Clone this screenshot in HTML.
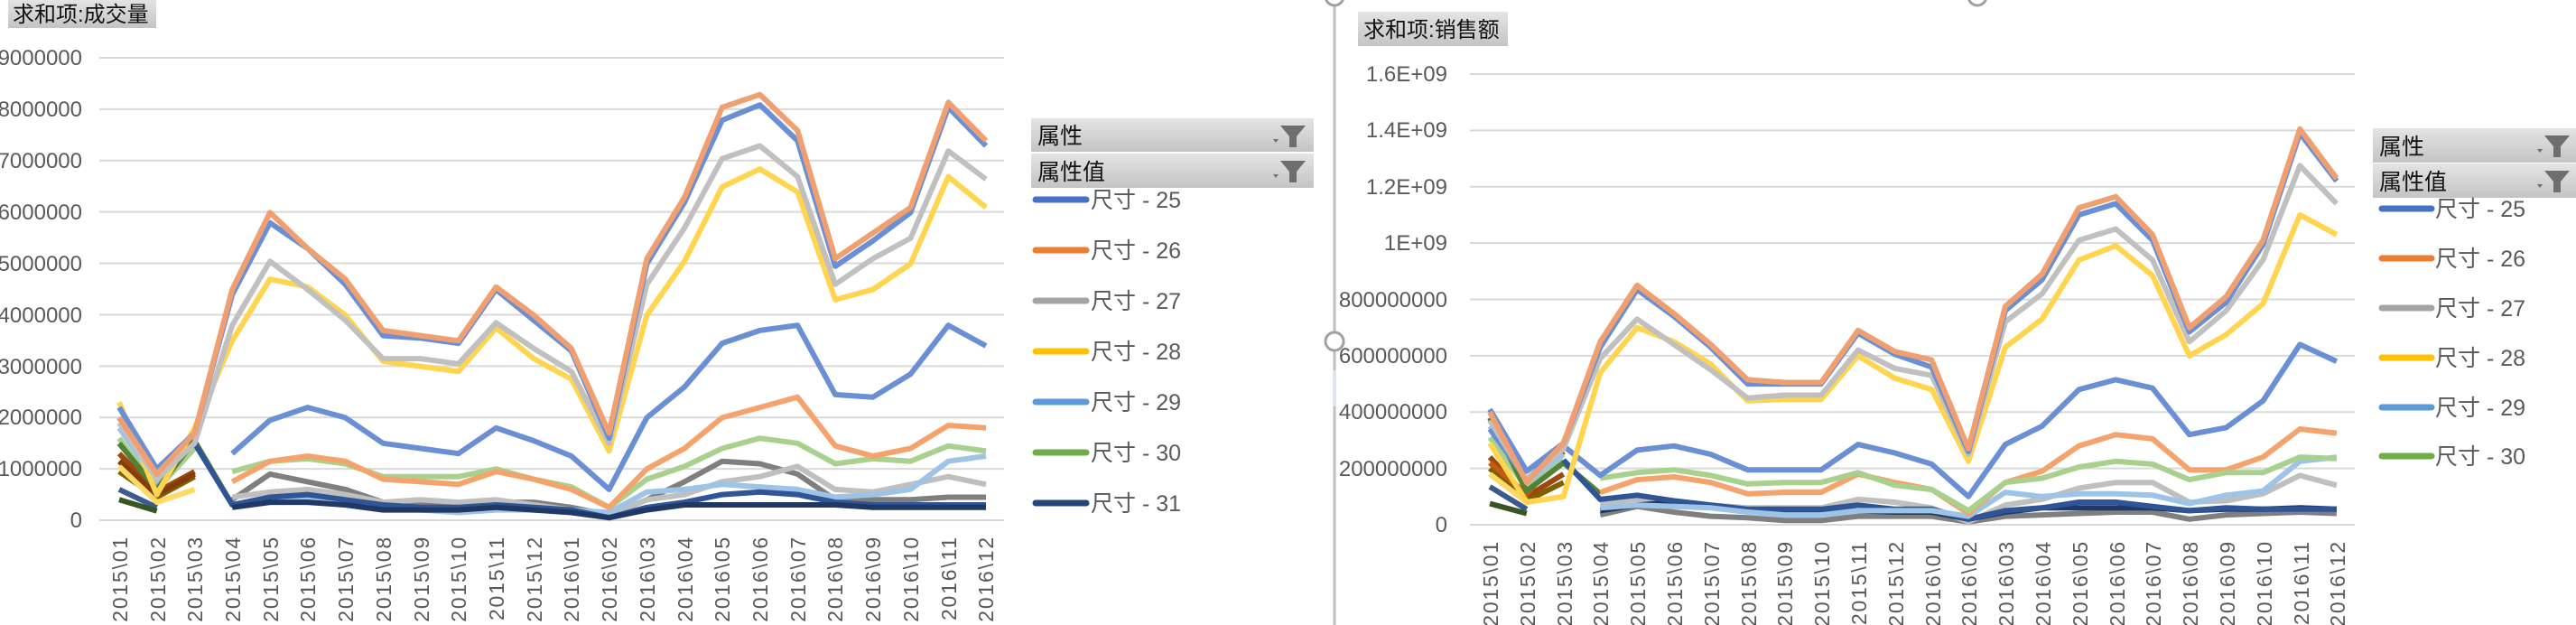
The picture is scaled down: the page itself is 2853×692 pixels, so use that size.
<!DOCTYPE html>
<html><head><meta charset="utf-8">
<style>
html,body{margin:0;padding:0;background:#fff;}
body{width:2853px;height:692px;overflow:hidden;position:relative;font-family:"Liberation Sans","Noto Sans CJK SC",sans-serif;}
svg{position:absolute;left:0;top:0;}
text{font-family:"Liberation Sans","Noto Sans CJK SC",sans-serif;fill:#595959;}
.xl text{letter-spacing:1.8px;}
</style></head><body>
<svg id="s" width="2853" height="692" viewBox="0 0 2853 692">
<defs>
<linearGradient id="hg" x1="0" y1="0" x2="0" y2="1"><stop offset="0" stop-color="#e4e4e4"/><stop offset="1" stop-color="#c4c4c4"/></linearGradient>
</defs>
<!-- LEFT CHART -->
<rect x="9" y="0" width="164" height="31" fill="url(#hg)"/>
<text x="14" y="24" font-size="24" style="fill:#111">求和项:成交量</text>
<g id="lgrid" stroke="#d9d9d9" stroke-width="2"></g>
<g font-size="24" text-anchor="end">
<text x="91" y="72">9000000</text><text x="91" y="129">8000000</text><text x="91" y="186">7000000</text>
<text x="91" y="243">6000000</text><text x="91" y="300">5000000</text><text x="91" y="357">4000000</text>
<text x="91" y="414">3000000</text><text x="91" y="470">2000000</text><text x="91" y="527">1000000</text>
<text x="91" y="584">0</text>
</g>
<g id="lx" class="xl" font-size="23" text-anchor="end">
<text transform="translate(141,593) rotate(-90)">2015\01</text>
<text transform="translate(183,593) rotate(-90)">2015\02</text>
<text transform="translate(224,593) rotate(-90)">2015\03</text>
<text transform="translate(266,593) rotate(-90)">2015\04</text>
<text transform="translate(308,593) rotate(-90)">2015\05</text>
<text transform="translate(349,593) rotate(-90)">2015\06</text>
<text transform="translate(391,593) rotate(-90)">2015\07</text>
<text transform="translate(433,593) rotate(-90)">2015\08</text>
<text transform="translate(475,593) rotate(-90)">2015\09</text>
<text transform="translate(516,593) rotate(-90)">2015\10</text>
<text transform="translate(558,593) rotate(-90)">2015\11</text>
<text transform="translate(600,593) rotate(-90)">2015\12</text>
<text transform="translate(641,593) rotate(-90)">2016\01</text>
<text transform="translate(683,593) rotate(-90)">2016\02</text>
<text transform="translate(725,593) rotate(-90)">2016\03</text>
<text transform="translate(767,593) rotate(-90)">2016\04</text>
<text transform="translate(808,593) rotate(-90)">2016\05</text>
<text transform="translate(850,593) rotate(-90)">2016\06</text>
<text transform="translate(892,593) rotate(-90)">2016\07</text>
<text transform="translate(933,593) rotate(-90)">2016\08</text>
<text transform="translate(975,593) rotate(-90)">2016\09</text>
<text transform="translate(1017,593) rotate(-90)">2016\10</text>
<text transform="translate(1059,593) rotate(-90)">2016\11</text>
<text transform="translate(1100,593) rotate(-90)">2016\12</text>
</g>
<g id="llines" fill="none" stroke-width="6" stroke-linejoin="round"></g>
<!-- left legend -->
<rect x="1142" y="131" width="313" height="37" fill="url(#hg)"/>
<rect x="1142" y="170" width="313" height="38" fill="url(#hg)"/>
<text x="1149" y="159" font-size="25" style="fill:#111">属性</text>
<text x="1149" y="199" font-size="25" style="fill:#111">属性值</text>
<g fill="#6e6e6e">
<path d="M1418 139h28l-10 12v12h-8v-12z"/><path d="M1410 154h6l-3 4z"/>
<path d="M1418 178h28l-10 12v12h-8v-12z"/><path d="M1410 193h6l-3 4z"/>
</g>
<g stroke-width="7" stroke-linecap="round">
<line x1="1147" y1="221" x2="1203" y2="221" stroke="#4472c4"/>
<line x1="1147" y1="277" x2="1203" y2="277" stroke="#ed7d31"/>
<line x1="1147" y1="333" x2="1203" y2="333" stroke="#a5a5a5"/>
<line x1="1147" y1="389" x2="1203" y2="389" stroke="#ffc000"/>
<line x1="1147" y1="445" x2="1203" y2="445" stroke="#5b9bd5"/>
<line x1="1147" y1="501" x2="1203" y2="501" stroke="#70ad47"/>
<line x1="1147" y1="557" x2="1203" y2="557" stroke="#264478"/>
</g>
<g font-size="25">
<text x="1208" y="230">尺寸 - 25</text><text x="1208" y="286">尺寸 - 26</text>
<text x="1208" y="342">尺寸 - 27</text><text x="1208" y="398">尺寸 - 28</text>
<text x="1208" y="454">尺寸 - 29</text><text x="1208" y="510">尺寸 - 30</text>
<text x="1208" y="566">尺寸 - 31</text>
</g>
<!-- divider -->
<line x1="1478" y1="0" x2="1478" y2="692" stroke="#bfbfbf" stroke-width="3"/>
<circle cx="1478" cy="-4" r="10" fill="#fff" stroke="#a0a0a0" stroke-width="3"/>
<circle cx="1478" cy="378" r="10" fill="#fff" stroke="#a0a0a0" stroke-width="3"/>
<circle cx="2190" cy="-4" r="10" fill="#fff" stroke="#a0a0a0" stroke-width="3"/>
<rect x="1476" y="410" width="4" height="40" fill="#dde4f0"/>

<!-- RIGHT CHART -->
<rect x="1504" y="13" width="166" height="38" fill="url(#hg)"/>
<text x="1510" y="41" font-size="24" style="fill:#111">求和项:销售额</text>
<g id="rgrid" stroke="#d9d9d9" stroke-width="2"></g>
<g font-size="24" text-anchor="end">
<text x="1603" y="90">1.6E+09</text><text x="1603" y="152">1.4E+09</text>
<text x="1603" y="215">1.2E+09</text><text x="1603" y="277">1E+09</text>
<text x="1603" y="340">800000000</text><text x="1603" y="402">600000000</text>
<text x="1603" y="464">400000000</text><text x="1603" y="527">200000000</text>
<text x="1603" y="589">0</text>
</g>
<g id="rx" class="xl" font-size="23" text-anchor="end">
<text transform="translate(1659,598) rotate(-90)">2015\01</text>
<text transform="translate(1700,598) rotate(-90)">2015\02</text>
<text transform="translate(1741,598) rotate(-90)">2015\03</text>
<text transform="translate(1781,598) rotate(-90)">2015\04</text>
<text transform="translate(1822,598) rotate(-90)">2015\05</text>
<text transform="translate(1863,598) rotate(-90)">2015\06</text>
<text transform="translate(1904,598) rotate(-90)">2015\07</text>
<text transform="translate(1945,598) rotate(-90)">2015\08</text>
<text transform="translate(1985,598) rotate(-90)">2015\09</text>
<text transform="translate(2026,598) rotate(-90)">2015\10</text>
<text transform="translate(2067,598) rotate(-90)">2015\11</text>
<text transform="translate(2108,598) rotate(-90)">2015\12</text>
<text transform="translate(2149,598) rotate(-90)">2016\01</text>
<text transform="translate(2189,598) rotate(-90)">2016\02</text>
<text transform="translate(2230,598) rotate(-90)">2016\03</text>
<text transform="translate(2271,598) rotate(-90)">2016\04</text>
<text transform="translate(2312,598) rotate(-90)">2016\05</text>
<text transform="translate(2353,598) rotate(-90)">2016\06</text>
<text transform="translate(2393,598) rotate(-90)">2016\07</text>
<text transform="translate(2434,598) rotate(-90)">2016\08</text>
<text transform="translate(2475,598) rotate(-90)">2016\09</text>
<text transform="translate(2516,598) rotate(-90)">2016\10</text>
<text transform="translate(2557,598) rotate(-90)">2016\11</text>
<text transform="translate(2597,598) rotate(-90)">2016\12</text>
</g>
<g id="rlines" fill="none" stroke-width="6" stroke-linejoin="round"></g>
<rect x="2628" y="142" width="225" height="38" fill="url(#hg)"/>
<rect x="2628" y="181" width="225" height="38" fill="url(#hg)"/>
<text x="2635" y="171" font-size="25" style="fill:#111">属性</text>
<text x="2635" y="210" font-size="25" style="fill:#111">属性值</text>
<g fill="#6e6e6e">
<path d="M2818 150h28l-10 12v12h-8v-12z"/><path d="M2810 165h6l-3 4z"/>
<path d="M2818 189h28l-10 12v12h-8v-12z"/><path d="M2810 204h6l-3 4z"/>
</g>
<g stroke-width="7" stroke-linecap="round">
<line x1="2638" y1="231" x2="2693" y2="231" stroke="#4472c4"/>
<line x1="2638" y1="286" x2="2693" y2="286" stroke="#ed7d31"/>
<line x1="2638" y1="341" x2="2693" y2="341" stroke="#a5a5a5"/>
<line x1="2638" y1="396" x2="2693" y2="396" stroke="#ffc000"/>
<line x1="2638" y1="451" x2="2693" y2="451" stroke="#5b9bd5"/>
<line x1="2638" y1="505" x2="2693" y2="505" stroke="#70ad47"/>
</g>
<g font-size="25">
<text x="2697" y="240">尺寸 - 25</text><text x="2697" y="295">尺寸 - 26</text>
<text x="2697" y="350">尺寸 - 27</text><text x="2697" y="405">尺寸 - 28</text>
<text x="2697" y="460">尺寸 - 29</text><text x="2697" y="514">尺寸 - 30</text>
</g>
</svg>
<script>
(function(){
var NS="http://www.w3.org/2000/svg";
function grid(id,x1,x2,ys){var g=document.getElementById(id);ys.forEach(function(y){var l=document.createElementNS(NS,"line");l.setAttribute("x1",x1);l.setAttribute("x2",x2);l.setAttribute("y1",y);l.setAttribute("y2",y);g.appendChild(l);});}
var ly=[];for(var i=0;i<10;i++)ly.push(64+i*(512/9));
grid("lgrid",110,1112,ly);
var ry=[];for(var i=0;i<9;i++)ry.push(82+i*(499/8));
grid("rgrid",1628,2608,ry);
function draw(id,x0,dx,y0,sc,series){var g=document.getElementById(id);
series.forEach(function(s){var pts=[];s[1].forEach(function(v,i){if(v===null){if(pts.length>1)add(pts);pts=[];return;}pts.push((x0+i*dx).toFixed(1)+","+(y0-v*sc).toFixed(1));});if(pts.length>1)add(pts);
function add(p){var pl=document.createElementNS(NS,"polyline");pl.setAttribute("points",p.join(" "));pl.setAttribute("stroke",s[0]);g.appendChild(pl);}});}
var N=null;
var L=[
["#3d5a8c",[0.6,0.25,N]],["#375623",[0.4,0.18,N]],
["#9e480e",[1.3,0.55,0.95]],["#7f6000",[0.95,0.45,0.85]],["#843c0c",[1.15,0.5,0.9]],
["#a9d18e",[1.6,0.6,1.4]],["#9dc3e6",[1.8,0.75,1.5]],["#c55a11",[2.0,0.85,1.6]],
["#ffd966",[1.05,0.35,0.6]],["#548235",[1.5,0.6,1.55,0.3]],
["#7f7f7f",[N,N,N,0.4,0.9,0.75,0.6,0.35,0.3,0.3,0.35,0.35,0.25,0.1,0.4,0.75,1.15,1.1,0.9,0.4,0.4,0.4,0.45,0.45]],
["#bfbfbf",[N,N,N,0.45,0.55,0.6,0.5,0.35,0.4,0.35,0.4,0.3,0.2,0.1,0.4,0.5,0.75,0.85,1.05,0.6,0.55,0.7,0.85,0.7]],
["#9dc3e6",[N,N,N,0.3,0.45,0.4,0.3,0.25,0.2,0.15,0.2,0.2,0.2,0.15,0.55,0.6,0.7,0.65,0.6,0.45,0.5,0.6,1.15,1.25]],
["#2f5597",[N,N,1.5,0.3,0.45,0.5,0.4,0.3,0.25,0.25,0.3,0.25,0.2,0.05,0.25,0.35,0.5,0.55,0.5,0.35,0.3,0.3,0.3,0.3]],
["#1f3864",[N,N,N,0.25,0.35,0.35,0.3,0.2,0.2,0.2,0.25,0.2,0.15,0.05,0.2,0.3,0.3,0.3,0.3,0.3,0.25,0.25,0.25,0.25]],
["#a9d18e",[N,N,N,0.95,1.15,1.2,1.1,0.85,0.85,0.85,1.0,0.8,0.65,0.25,0.8,1.05,1.4,1.6,1.5,1.1,1.2,1.15,1.45,1.35]],
["#f4a36c",[N,N,N,0.75,1.15,1.25,1.15,0.8,0.75,0.7,0.95,0.8,0.6,0.25,1.0,1.4,2.0,2.2,2.4,1.45,1.25,1.4,1.85,1.8]],
["#6a8fd4",[N,N,N,1.3,1.95,2.2,2.0,1.5,1.4,1.3,1.8,1.55,1.25,0.6,2.0,2.6,3.45,3.7,3.8,2.45,2.4,2.85,3.8,3.4]],
["#ffd54f",[2.3,0.5,1.8,3.5,4.7,4.55,4.0,3.1,3.0,2.9,3.75,3.15,2.75,1.35,4.0,5.05,6.5,6.85,6.4,4.3,4.5,5.0,6.7,6.1]],
["#c0c0c0",[1.9,0.8,1.5,3.8,5.05,4.5,3.9,3.15,3.15,3.05,3.85,3.35,2.9,1.5,4.6,5.7,7.05,7.3,6.7,4.6,5.1,5.5,7.2,6.65]],
["#6a8fd4",[2.2,1.0,1.7,4.4,5.8,5.3,4.6,3.6,3.55,3.45,4.5,3.9,3.3,1.6,5.0,6.2,7.8,8.1,7.4,4.95,5.45,6.0,8.05,7.3]],
["#f0a070",[2.0,0.9,1.7,4.5,6.0,5.3,4.7,3.7,3.6,3.5,4.55,4.0,3.35,1.7,5.1,6.3,8.05,8.3,7.6,5.1,5.6,6.1,8.15,7.4]]
];
draw("llines",132,41.74,576,511/9,L);
var R=[
["#375623",[0.75,0.4,N]],["#3d5a8c",[1.35,0.55,N]],
["#9e480e",[2.4,1.0,1.8]],["#7f6000",[2.0,0.85,1.5]],["#c55a11",[2.2,1.1,2.6]],
["#a9d18e",[3.1,1.3,2.3]],["#9dc3e6",[3.5,1.5,2.5]],["#ffd966",[1.8,0.8,1.0]],
["#548235",[3.8,1.2,2.2,1.1]],
["#7f7f7f",[N,N,N,0.35,0.65,0.45,0.3,0.25,0.15,0.15,0.3,0.3,0.3,0.1,0.3,0.35,0.4,0.45,0.45,0.2,0.35,0.4,0.45,0.4]],
["#bfbfbf",[N,N,N,0.75,0.9,0.85,0.7,0.6,0.6,0.6,0.9,0.8,0.6,0.1,0.7,0.9,1.3,1.5,1.5,0.8,0.85,1.1,1.75,1.4]],
["#1f3864",[N,N,N,0.5,0.7,0.8,0.65,0.5,0.5,0.5,0.5,0.45,0.45,0.2,0.45,0.6,0.6,0.6,0.6,0.5,0.55,0.55,0.6,0.55]],
["#2f5597",[N,N,2.3,0.9,1.05,0.85,0.7,0.55,0.55,0.55,0.7,0.55,0.55,0.2,0.5,0.6,0.8,0.8,0.65,0.5,0.6,0.55,0.55,0.55]],
["#9dc3e6",[N,N,N,0.6,0.7,0.65,0.6,0.45,0.35,0.35,0.5,0.5,0.5,0.3,1.15,1.0,1.1,1.1,1.05,0.75,1.05,1.2,2.25,2.4]],
["#f4a36c",[N,N,N,1.15,1.6,1.7,1.5,1.1,1.15,1.15,1.8,1.5,1.25,0.4,1.5,1.9,2.8,3.2,3.05,1.95,1.95,2.4,3.4,3.25]],
["#a9d18e",[N,N,N,1.65,1.85,1.95,1.75,1.45,1.5,1.5,1.85,1.4,1.25,0.5,1.5,1.65,2.05,2.25,2.15,1.6,1.85,1.85,2.4,2.35]],
["#6a8fd4",[3.4,1.6,2.8,1.75,2.65,2.8,2.5,1.95,1.95,1.95,2.85,2.55,2.15,1.0,2.85,3.5,4.8,5.15,4.85,3.2,3.45,4.4,6.4,5.8]],
["#ffd54f",[2.9,0.8,1.0,5.4,7.0,6.5,5.7,4.4,4.45,4.45,6.0,5.2,4.8,2.25,6.3,7.3,9.4,9.9,8.85,6.0,6.75,7.85,11.0,10.3]],
["#c0c0c0",[3.7,1.6,2.7,5.9,7.3,6.4,5.5,4.5,4.6,4.6,6.2,5.55,5.3,2.5,7.2,8.2,10.1,10.5,9.4,6.5,7.6,9.4,12.75,11.4]],
["#6a8fd4",[4.1,1.9,2.9,6.3,8.35,7.4,6.3,5.0,5.0,5.0,6.8,6.05,5.6,2.6,7.6,8.7,11.0,11.4,10.1,6.85,7.9,9.95,13.9,12.2]],
["#f0a070",[4.0,1.5,2.9,6.5,8.5,7.5,6.4,5.15,5.05,5.05,6.9,6.15,5.85,2.7,7.75,8.9,11.25,11.65,10.3,7.0,8.1,10.1,14.05,12.3]]
];
draw("rlines",1650,40.78,581,499/16,R);
})();
</script>
</body></html>
